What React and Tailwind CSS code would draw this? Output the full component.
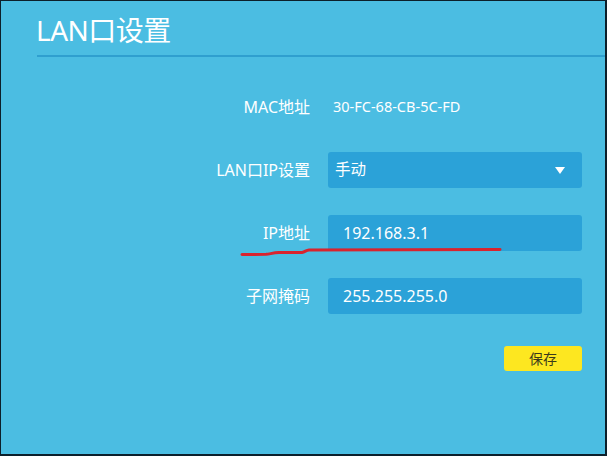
import React from 'react'

const font = { fontFamily: '"Noto Sans", "Noto Sans CJK SC", sans-serif' }

const Row = ({ label, children }) => (
    <div className="flex items-center gap-[18px] h-[36px]">
        <div className="w-[309px] text-right text-white leading-none text-[16px]">{label}</div>
        {children}
    </div>
)

const Field = ({ children, className = '' }) => (
    <div className={`w-[254px] h-[36px] rounded-[3px] bg-[#2ba2d8] flex items-center text-white ${className}`}>
        {children}
    </div>
)

export default function App() {
    return (
        <div style={font} className="relative w-[607px] h-[456px] bg-[#4bbde2] border-l border-t border-r-2 border-b-2 border-[#0c1f2b] overflow-hidden">
            <h1 className="pl-[35px] pt-[14px] h-[43px] text-[28px] leading-[30px] text-white tracking-[-0.5px]">LAN口设置</h1>
            <div className="ml-[36px] mt-[11px] h-[2px] bg-[#2f9fcf]" />

            <div className="mt-[32px] flex flex-col gap-[27px]">
                <Row label="MAC地址">
                    <span className="pl-[5px] text-[14.5px] text-white">30-FC-68-CB-5C-FD</span>
                </Row>
                <Row label="LAN口IP设置">
                    <Field className="pl-[7px] pr-[17px] justify-between">
                        <span className="text-[15.5px]">手动</span>
                        <svg width="10" height="7" viewBox="0 0 10 7">
                            <path d="M0 0 H10 L5 7 Z" fill="#ffffff" />
                        </svg>
                    </Field>
                </Row>
                <Row label="IP地址">
                    <Field className="pl-[15px] text-[16px]">192.168.3.1</Field>
                </Row>
                <Row label="子网掩码">
                    <Field className="pl-[15px] text-[16px]">255.255.255.0</Field>
                </Row>
            </div>

            <div className="mt-[32px] w-[581px] flex justify-end">
                <button className="w-[78px] h-[25px] rounded-[3px] bg-[#fde720] text-[14px] text-[#3b3a1c] leading-none">保存</button>
            </div>

            <svg className="absolute left-0 top-0 pointer-events-none" width="605" height="453" viewBox="1 1 605 453">
                <path
                    d="M242 254.5 L266 254.3 C270 254 273 252.8 279 252.6 L302 252.4 C305 252 306 250.3 309 250 L500 249.6"
                    fill="none"
                    stroke="#d9232e"
                    strokeWidth="3"
                    strokeLinecap="round"
                    strokeLinejoin="round"
                />
            </svg>
        </div>
    )
}
